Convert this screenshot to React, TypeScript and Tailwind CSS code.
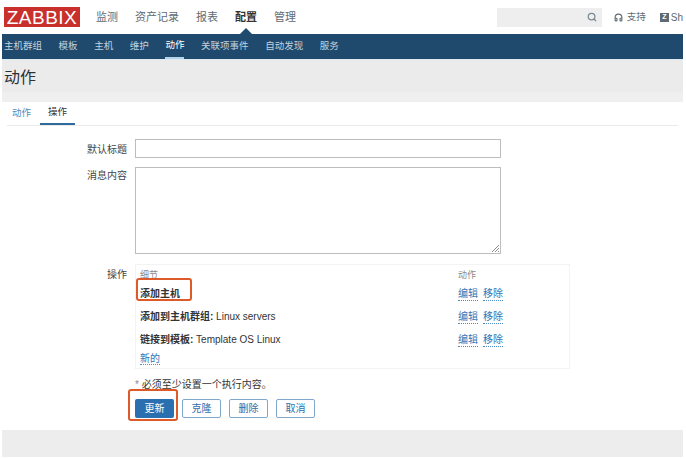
import { Search, Headphones } from 'lucide-react'

const cjk = "font-['Liberation_Sans','Noto_Sans_CJK_SC',sans-serif]"

const topMenu = [
  { label: '监测' },
  { label: '资产记录' },
  { label: '报表' },
  { label: '配置', active: true },
  { label: '管理' },
]

const subMenu = ['主机群组', '模板', '主机', '维护', '动作', '关联项事件', '自动发现', '服务']

const operations = [
  { bold: '添加主机', rest: '', mark: true },
  { bold: '添加到主机群组:', rest: ' Linux servers' },
  { bold: '链接到模板:', rest: ' Template OS Linux' },
]

function LinkText({ children }: { children: React.ReactNode }) {
  return <a className="border-b border-dotted border-[#4d8bc4] leading-[13px] text-[#2f75b5]">{children}</a>
}

function OutlineButton({ children }: { children: React.ReactNode }) {
  return (
    <button className="flex h-[19px] w-[39px] items-center justify-center rounded-[2px] border border-[#7fa8cc] bg-white text-[10px] text-[#2f6ea8]">
      {children}
    </button>
  )
}

export default function App() {
  return (
    <div className={`${cjk} flex h-[459px] w-[686px] flex-col overflow-hidden bg-white pr-[3px] pb-[2px] text-[#333]`}>
      {/* Top menu */}
      <header className="flex h-[34px] items-center pl-[4px]">
        <div className="flex h-[20px] w-[76px] items-center justify-center bg-[#c9302c] text-[19px] leading-none tracking-[0.5px] text-white">
          ZABBIX
        </div>
        <nav className="ml-[16px] flex gap-[17px] text-[11px] text-[#5f6b73]">
          {topMenu.map(item => (
            <span key={item.label} className={item.active ? 'font-bold text-[#333]' : ''}>
              {item.label}
            </span>
          ))}
        </nav>
        <div className="ml-auto flex items-center">
          <div className="flex h-[19px] w-[105px] items-center justify-end bg-[#eeeeee] pr-[5px]">
            <Search size={10} strokeWidth={3} className="text-[#7d8a92]" />
          </div>
          <span className="ml-[12px] flex items-center gap-[4px] text-[9.5px] text-[#5f6b73]">
            <Headphones size={9} strokeWidth={3} />
            支持
          </span>
          <span className="ml-[14px] flex items-center gap-[2px] text-[10px] text-[#5f6b73]">
            <span className="flex h-[9px] w-[9px] items-center justify-center bg-[#5f6b73] text-[7px] font-bold text-white">Z</span>
            Sh
          </span>
        </div>
      </header>

      {/* Submenu */}
      <nav className="relative ml-[2px] flex h-[25px] gap-[16.6px] bg-[#1f4a6e] pl-[2px] text-[9.5px] text-[#c3d2de]">
        <span className="absolute -top-[6px] left-[238px] h-0 w-0 border-x-[6px] border-b-[6px] border-x-transparent border-b-[#1f4a6e]" />
        {subMenu.map(item => (
          <span
            key={item}
            className={item === '动作' ? 'flex h-full items-center border-b-2 border-[#b5d3e8] text-white' : 'flex h-full items-center'}
          >
            {item}
          </span>
        ))}
      </nav>

      {/* Page title */}
      <div className="ml-[2px] flex h-[33px] items-center border-t border-[#dceaf2] bg-[#ebebeb] pl-[2px] pt-[4px] text-[16px] text-[#2b3238]">动作</div>
      <div className="ml-[2px] h-[10px] bg-[#efefef]" />

      {/* Tabs and form */}
      <main className="ml-[2px] flex h-[328px] flex-col bg-white">
        <div className="mx-[5px] flex h-[24px] gap-[9px] border-b border-[#ebebeb] pl-[5px] text-[9.5px]">
          <span className="flex items-center text-[#4f8cbd]">动作</span>
          <span className="flex items-center border-b-2 border-[#2f6a9c] px-[8px] text-[#333]">操作</span>
        </div>

        <div className="mt-[13px] flex flex-col text-[10px]">
          <div className="flex">
            <label className="w-[125px] pt-[3px] text-right text-[#444]">默认标题</label>
            <div className="ml-[8px] h-[19px] w-[366px] border border-[#bdbdbd] bg-white" />
          </div>
          <div className="mt-[9px] flex">
            <label className="w-[125px] pt-[1px] text-right text-[#444]">消息内容</label>
            <div className="relative ml-[8px] h-[87px] w-[366px] border border-[#bdbdbd] bg-white">
              <svg className="absolute bottom-0 right-0" width="9" height="9" viewBox="0 0 9 9" stroke="#8a8a8a" strokeWidth="1">
                <path d="M1 8 L8 1 M4 8 L8 4 M7 8 L8 7" />
              </svg>
            </div>
          </div>

          <div className="mt-[10px] flex">
            <label className="w-[125px] pt-[3px] text-right text-[#444]">操作</label>
            <div className="ml-[8px] h-[105px] w-[435px] border border-[#f3f3f3] px-[4px] pt-[4px]">
              <div className="flex h-[13px] text-[9px] text-[#8a8a8a]">
                <span className="w-[318px]">细节</span>
                <span>动作</span>
              </div>
              {operations.map(op => (
                <div key={op.bold} className="flex h-[23px] items-center text-[#333]">
                  <span className="relative w-[318px]">
                    <span className="font-bold">{op.bold}</span>
                    {op.rest}
                    {op.mark && (
                      <span className="absolute -left-[4px] -top-[8px] h-[23px] w-[56px] rounded-[3px] border-2 border-[#dd5a2b]" />
                    )}
                  </span>
                  <span className="flex gap-[5px]">
                    <LinkText>编辑</LinkText>
                    <LinkText>移除</LinkText>
                  </span>
                </div>
              ))}
              <LinkText>新的</LinkText>
            </div>
          </div>

          <div className="ml-[133px] mt-[8px] leading-[15px] text-[#333]">
            <span className="text-[#8a8a8a]">* </span>必须至少设置一个执行内容。
          </div>

          <div className="ml-[133px] mt-[7px] flex gap-[8px]">
            <span className="relative">
              <button className="flex h-[19px] w-[39px] items-center justify-center rounded-[2px] bg-[#2a6fb0] text-[10px] text-white">
                更新
              </button>
              <span className="absolute -left-[7px] -top-[10px] h-[32px] w-[50px] rounded-[3px] border-2 border-[#dd5a2b]" />
            </span>
            <OutlineButton>克隆</OutlineButton>
            <OutlineButton>删除</OutlineButton>
            <OutlineButton>取消</OutlineButton>
          </div>
        </div>
      </main>

      <div className="ml-[2px] flex-1 bg-[#ededee]" />
    </div>
  )
}
